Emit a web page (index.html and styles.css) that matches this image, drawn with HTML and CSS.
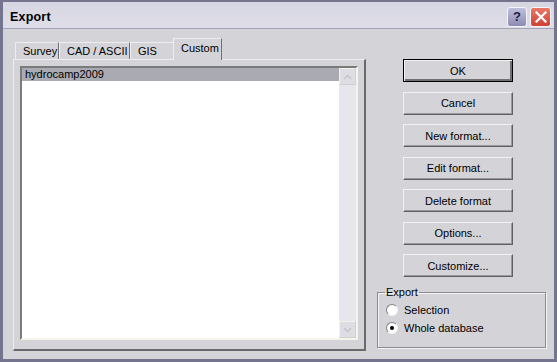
FILE: index.html
```html
<!DOCTYPE html>
<html lang="en">
<head>
  <meta charset="UTF-8" />
  <title>Export</title>
  <link rel="stylesheet" href="styles.css">
</head>
<body>

  <div class="window">

    <!-- TITLE BAR -->
    <div class="titlebar">
      <span class="title">Export</span>
      <div class="title-buttons">
        <span class="tb-btn help">?</span>
        <span class="tb-btn close">
          <svg width="12" height="12" viewBox="0 0 12 12">
            <path d="M1.5 1.5 L10.5 10.5 M10.5 1.5 L1.5 10.5" stroke="#fff" stroke-width="2.2" stroke-linecap="square"/>
          </svg>
        </span>
      </div>
    </div>

    <div class="client">

      <!-- TABS + LIST -->
      <div class="tabs-area">
        <div class="tab-strip">
          <div class="tab tab-survey">Survey</div>
          <div class="tab tab-cad">CAD / ASCII</div>
          <div class="tab tab-gis">GIS</div>
          <div class="tab tab-custom active">Custom</div>
        </div>
        <div class="tab-panel">
          <div class="listbox">
            <div class="list-items">
              <div class="item selected">hydrocamp2009</div>
            </div>
            <div class="scrollbar">
              <div class="sb-arrow">
                <svg width="9" height="6" viewBox="0 0 9 6"><path d="M1 5 L4.5 1.5 L8 5" fill="none" stroke="#c4c4cc" stroke-width="1.5"/></svg>
              </div>
              <div class="sb-track"></div>
              <div class="sb-arrow">
                <svg width="9" height="6" viewBox="0 0 9 6"><path d="M1 1 L4.5 4.5 L8 1" fill="none" stroke="#c4c4cc" stroke-width="1.5"/></svg>
              </div>
            </div>
          </div>
        </div>
      </div>

      <!-- BUTTONS + OPTIONS -->
      <div class="side">
        <div class="buttons">
          <button class="btn default">OK</button>
          <button class="btn">Cancel</button>
          <button class="btn">New format...</button>
          <button class="btn">Edit format...</button>
          <button class="btn">Delete format</button>
          <button class="btn">Options...</button>
          <button class="btn">Customize...</button>
        </div>

        <fieldset class="group">
          <legend>Export</legend>
          <label class="radio-row"><span class="radio"></span>Selection</label>
          <label class="radio-row"><span class="radio checked"></span>Whole database</label>
        </fieldset>
      </div>

    </div>
  </div>

</body>
</html>
```

FILE: styles.css
```css
body {
  margin: 0;
  font-family: "Liberation Sans", Arial, sans-serif;
  font-size: 11px;
  color: #000;
  background-color: #d4d3d8;
}

.window {
  box-sizing: border-box;
  width: 557px;
  height: 362px;
  border: 3px solid #74748f;
  border-top-width: 2px;
  background-color: #d4d3d8;
}

/* Title bar */
.titlebar {
  box-sizing: border-box;
  height: 27px;
  display: flex;
  align-items: center;
  justify-content: space-between;
  padding: 3px 3px 0 7px;
  background: linear-gradient(#d6d6e2, #dedde8);
  border-bottom: 1px solid #a4a4b8;
}

.title {
  font-weight: bold;
  font-size: 12.5px;
  letter-spacing: 0.2px;
}

.title-buttons {
  display: flex;
  gap: 3px;
}

.tb-btn {
  box-sizing: border-box;
  width: 20px;
  height: 20px;
  border-radius: 3px;
  border: 1px solid #f4f4fa;
  display: flex;
  align-items: center;
  justify-content: center;
}

.help {
  background: linear-gradient(#c0c0dc, #8c8cb4);
  color: #1c1c48;
  font-weight: bold;
  font-size: 13px;
}

.close {
  width: 21px;
  background: linear-gradient(#ea7868, #cc4232);
}

/* Client area */
.client {
  display: flex;
  padding: 9px 0 0 10px;
}

.tabs-area {
  width: 353px;
}

.tab-strip {
  display: flex;
  align-items: flex-end;
  height: 21px;
  padding-left: 2px;
}

.tab {
  box-sizing: border-box;
  height: 17px;
  padding: 2px 0 0 7px;
  border-top: 1px solid #eeeef2;
  border-left: 1px solid #eeeef2;
  border-right: 1px solid #707070;
}

.tab-survey { width: 44px; }
.tab-cad { width: 71px; }
.tab-gis { width: 43px; border-right: none; }
.tab-custom { width: 49px; }

.tab.active {
  height: 22px;
  margin-bottom: -1px;
  padding-top: 3px;
  background-color: #d4d3d8;
  position: relative;
  z-index: 1;
}

.tab-panel {
  box-sizing: border-box;
  height: 292px;
  padding: 6px 6px 9px 6px;
  border: 1px solid #eeeef2;
  border-right: 2px solid #6a6a6a;
  border-bottom: 2px solid #6a6a6a;
}

.listbox {
  box-sizing: border-box;
  height: 274px;
  display: flex;
  border: 2px solid;
  border-color: #7a7a7a #f6f4ea #f6f4ea #7a7a7a;
  background-color: #fff;
}

.list-items {
  flex: 1;
}

.item {
  height: 13px;
  line-height: 13px;
  padding-left: 3px;
}

.item.selected {
  background-color: #aaaab2;
}

.scrollbar {
  width: 17px;
  display: flex;
  flex-direction: column;
  background-color: #e6e6ec;
}

.sb-arrow {
  box-sizing: border-box;
  height: 17px;
  display: flex;
  align-items: center;
  justify-content: center;
  border: 1px solid #f4f2e6;
  border-right-color: #cfcfd6;
  border-bottom-color: #cfcfd6;
  background-color: #dedde4;
}

.sb-track {
  flex: 1;
}

/* Right column */
.side {
  width: 169px;
  margin-left: 11px;
}

.buttons {
  display: flex;
  flex-direction: column;
  gap: 9.5px;
  margin: 21px 0 0 26px;
}

.btn {
  box-sizing: border-box;
  width: 110px;
  height: 23px;
  padding: 0;
  font-family: "Liberation Sans", Arial, sans-serif;
  font-size: 11px;
  color: #000;
  background-color: #d4d3d8;
  border: 1px solid;
  border-color: #f2f2f2 #606060 #606060 #f2f2f2;
  box-shadow: inset -1px -1px 0 #9a9a9a;
}

.btn.default {
  border: 1px solid #000;
  box-shadow: inset 1px 1px 0 #f2f2f2, inset -2px -2px 0 #707070;
}

.group {
  box-sizing: border-box;
  margin: 9px 0 0 0;
  height: 62px;
  padding: 3px 8px 0 8px;
  border: 1px solid #8c8c8c;
  box-shadow: inset 1px 1px 0 #f4f4f4, 1px 1px 0 #f4f4f4;
}

.group legend {
  padding: 0 1px;
  margin-left: -1px;
  line-height: 12px;
}

.radio-row {
  display: flex;
  align-items: center;
  height: 18px;
}

.radio {
  box-sizing: border-box;
  width: 12px;
  height: 12px;
  margin-right: 6px;
  border-radius: 50%;
  background-color: #fff;
  border: 1px solid;
  border-color: #808080 #f4f4f4 #f4f4f4 #808080;
  display: flex;
  align-items: center;
  justify-content: center;
}

.radio.checked::after {
  content: "";
  width: 4px;
  height: 4px;
  border-radius: 50%;
  background-color: #000;
}
```
